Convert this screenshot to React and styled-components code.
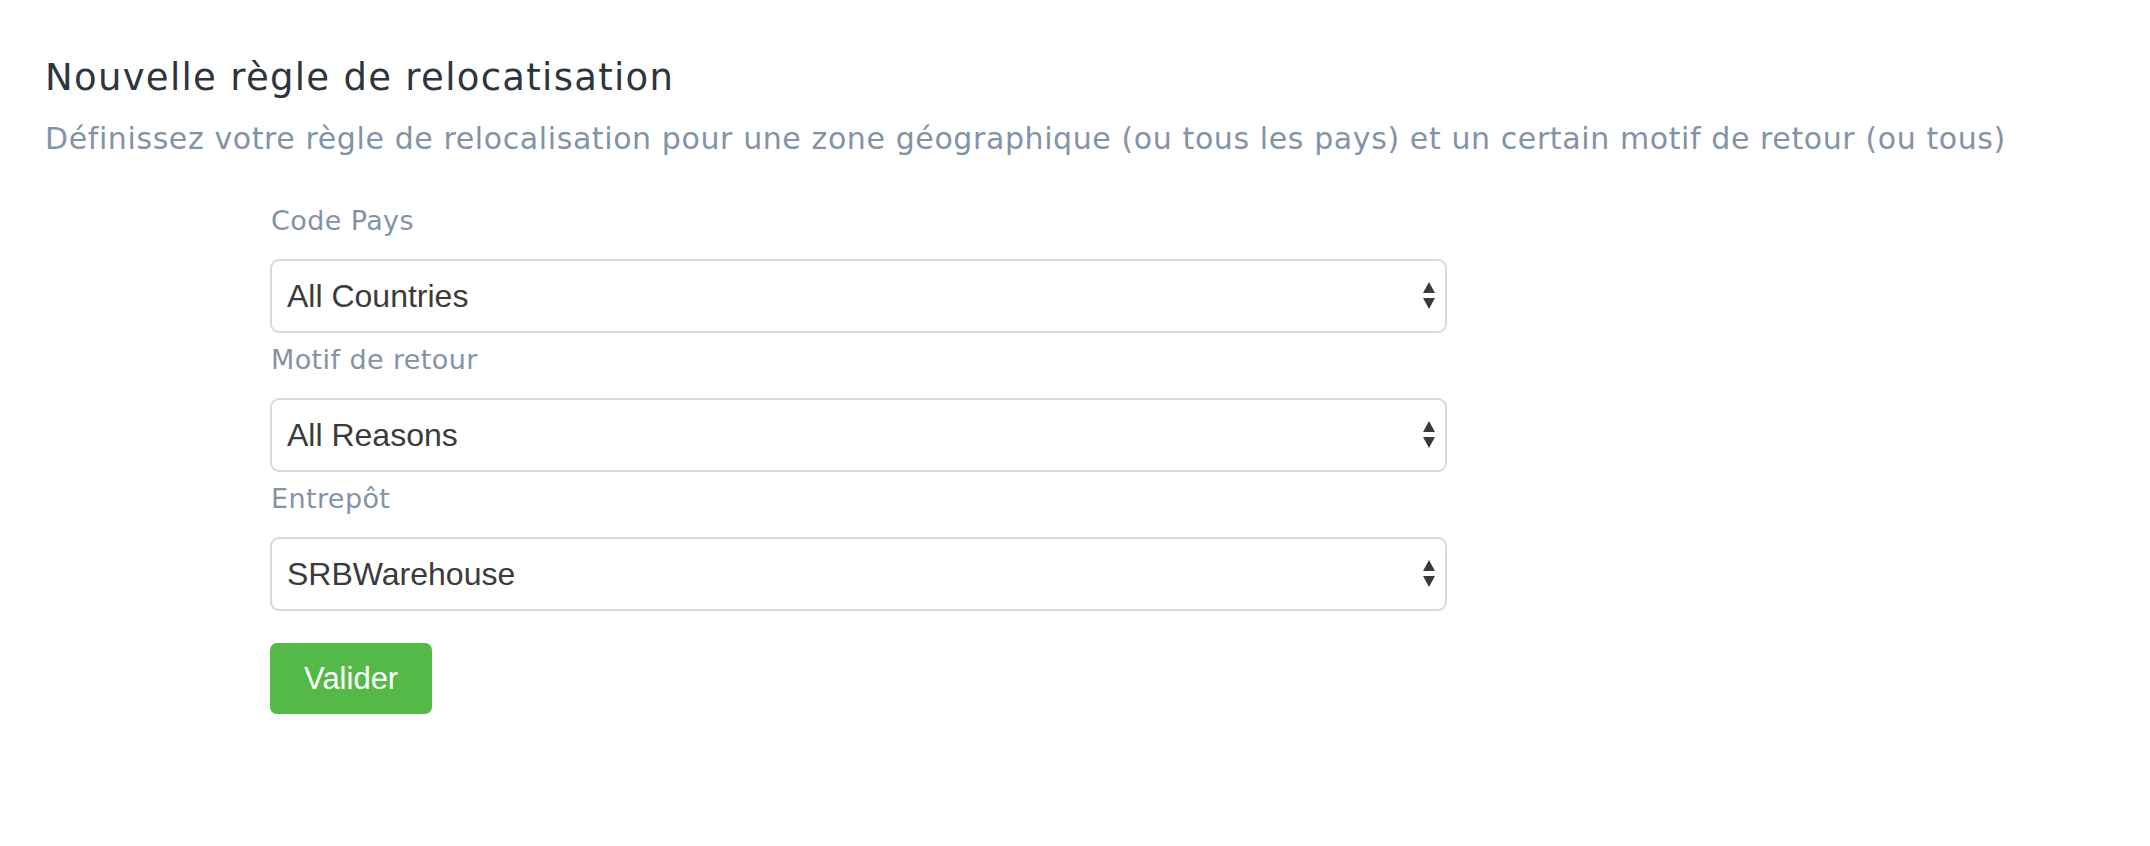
import React from "react";
import styled, { createGlobalStyle } from "styled-components";

const Global = createGlobalStyle`
  html, body { margin: 0; padding: 0; background: #ffffff; }
  body { font-family: "DejaVu Sans", "Open Sans", sans-serif; }
  * { box-sizing: border-box; }
`;

const Page = styled.div`
  padding: 54px 45px 40px 45px;
`;

const Title = styled.h1`
  margin: 0;
  font-family: "DejaVu Sans", "Open Sans", sans-serif;
  font-weight: 400;
  font-size: 37px;
  line-height: 48px;
  letter-spacing: 1.3px;
  color: #2c3540;
`;

const Subtitle = styled.p`
  margin: 17px 0 0 0;
  font-family: "DejaVu Sans", "Open Sans", sans-serif;
  font-weight: 400;
  font-size: 30px;
  line-height: 40px;
  letter-spacing: 0.6px;
  color: #8393a7;
`;

const Form = styled.form`
  margin: 44px 0 0 225px;
  width: 1177px;
  display: flex;
  flex-direction: column;
  gap: 9px;
`;

const Field = styled.div`
  display: flex;
  flex-direction: column;
  gap: 20px;
`;

const Label = styled.label`
  font-family: "DejaVu Sans", "Open Sans", sans-serif;
  font-size: 27px;
  line-height: 36px;
  letter-spacing: 0.4px;
  color: #8393a7;
  padding-left: 1px;
`;

const SelectWrap = styled.div`
  position: relative;
  height: 74px;
  border: 2px solid #d9d9d9;
  border-radius: 9px;
  background: #ffffff;
  display: flex;
  align-items: center;
`;

const Select = styled.select`
  appearance: none;
  -webkit-appearance: none;
  border: none;
  outline: none;
  background: transparent;
  width: 100%;
  height: 100%;
  padding: 0 60px 0 15px;
  font-family: "Liberation Sans", Arial, sans-serif;
  font-size: 32px;
  color: #3b3b3b;
`;

const Arrows = styled.svg`
  position: absolute;
  right: 9px;
  top: 50%;
  transform: translateY(-50%);
  pointer-events: none;
`;

const Button = styled.button`
  margin-top: 23px;
  align-self: flex-start;
  height: 71px;
  padding: 0 34px;
  border: none;
  border-radius: 7px;
  background: #55b947;
  color: #ffffff;
  font-family: "Liberation Sans", Arial, sans-serif;
  font-size: 31px;
  cursor: pointer;
`;

const fields = [
  { label: "Code Pays", value: "All Countries" },
  { label: "Motif de retour", value: "All Reasons" },
  { label: "Entrepôt", value: "SRBWarehouse" },
];

function SelectField({ label, value }) {
  return (
    <Field>
      <Label>{label}</Label>
      <SelectWrap>
        <Select defaultValue={value}>
          <option>{value}</option>
        </Select>
        <Arrows width="14" height="30" viewBox="0 0 14 30">
          <polygon points="7,1 13,12 1,12" fill="#3a3a3a" />
          <polygon points="1,17 13,17 7,28" fill="#3a3a3a" />
        </Arrows>
      </SelectWrap>
    </Field>
  );
}

export default function App() {
  return (
    <>
      <Global />
      <Page>
        <Title>Nouvelle règle de relocatisation</Title>
        <Subtitle>
          Définissez votre règle de relocalisation pour une zone géographique (ou tous les pays) et un certain motif de retour (ou tous)
        </Subtitle>
        <Form onSubmit={(e) => e.preventDefault()}>
          {fields.map((f) => (
            <SelectField key={f.label} {...f} />
          ))}
          <Button type="submit">Valider</Button>
        </Form>
      </Page>
    </>
  );
}
